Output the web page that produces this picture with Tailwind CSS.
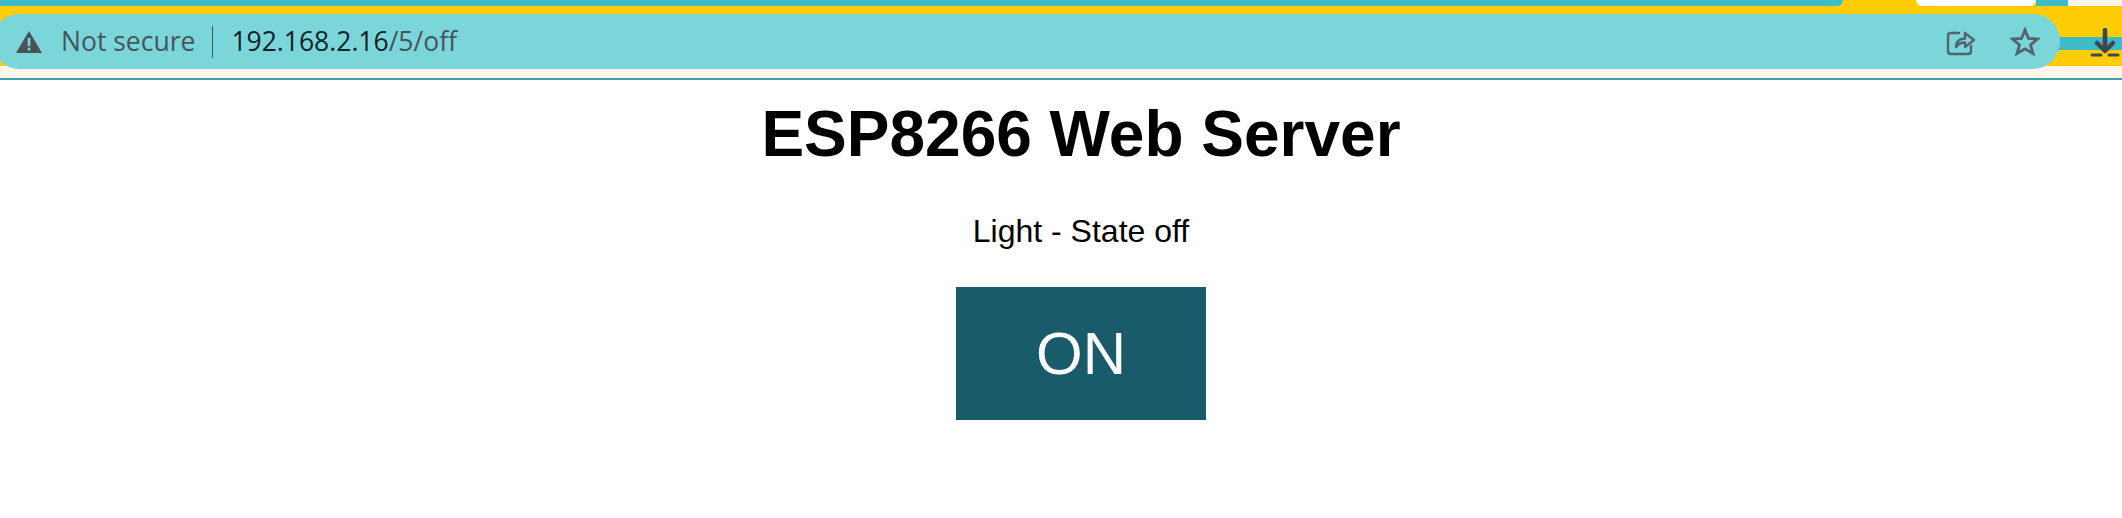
<!DOCTYPE html>
<html>
  <head>
    <title>ESP8266 Web Server</title>
    <script src="https://cdn.jsdelivr.net/npm/@tailwindcss/browser@4"></script>
  </head>
  <body class="bg-white font-['Liberation_Sans',sans-serif] h-[518px] overflow-hidden">
    <!-- browser chrome -->
    <div class="relative h-[80px] bg-[#fdf6e9] border-b-2 border-[#3fa3a5] overflow-hidden">
      <div class="flex h-[6px] bg-[#ffcd05]">
        <div class="w-[1843px] bg-[#3cbcc6] rounded-br-xl"></div>
        <div class="w-[73px]"></div>
        <div class="w-[120px] bg-white rounded-b-xl"></div>
        <div class="w-[32px] bg-[#3cbcc6]"></div>
        <div class="flex-1 bg-[#fdf6e9]"></div>
      </div>
      <div class="relative h-[60px] bg-[#ffcd05]">
        <div class="absolute left-[2050px] right-0 top-[31px] h-[13px] bg-[#3cbcc6]"></div>
      </div>

      <!-- address bar -->
      <div class="absolute left-[-8px] top-[14px] flex h-[55px] w-[2068px] items-center rounded-[28px] bg-[#7bd6da] pl-[24px] pr-[20px] font-['Open_Sans',sans-serif] text-[26.5px] text-[#47545c]">
        <svg class="w-[26px] h-[24px] shrink-0" viewBox="0 0 26 24">
          <path d="M13 1 L26 23 H0 Z" fill="#4a5258" />
          <rect x="11.7" y="8" width="2.6" height="8" fill="#7bd6da" />
          <rect x="11.7" y="17.6" width="2.6" height="2.8" fill="#7bd6da" />
        </svg>
        <span class="ml-[19px]">Not secure</span>
        <div class="ml-[17px] h-[32px] w-px bg-[#47545c]"></div>
        <div class="ml-[18px]"><span class="text-[#0e2228]">192.168.2.16</span>/5/off</div>
        <div class="ml-auto flex items-center gap-[34px]">
          <svg class="w-[30px] h-[28px]" viewBox="0 0 30 28" fill="none" stroke="#53626b" stroke-width="2.4" stroke-linejoin="round" stroke-linecap="round">
            <path d="M13 5 H5 Q2 5 2 8 V23 Q2 26 5 26 H22 Q25 26 25 23 V18" />
            <path d="M10 19 Q10 11 19 10.5 V5 L28 12 L19 19 V14.5 Q13 14.5 10 19 Z" />
          </svg>
          <svg class="w-[30px] h-[29px]" viewBox="0 0 30 29" fill="none" stroke="#53626b" stroke-width="2.8" stroke-linejoin="miter">
            <path d="M15 3 L18.5 11.5 L27.5 12 L20.5 18 L23 26.5 L15 21.8 L7 26.5 L9.5 18 L2.5 12 L11.5 11.5 Z" />
          </svg>
        </div>
      </div>

      <!-- download arrow -->
      <svg class="absolute left-[2090px] top-[28px] w-[30px] h-[30px]" viewBox="0 0 30 30" fill="none" stroke="#40474f" stroke-width="4.5" stroke-linecap="round" stroke-linejoin="round">
        <path d="M15 2 V22" />
        <path d="M7 15 L15 23 L23 15" />
        <path d="M2 27 H11 M19 27 H28" stroke-width="3" />
      </svg>
    </div>

    <!-- page -->
    <div class="flex flex-col items-center pl-[40px] text-center text-black">
      <h1 class="mt-[17px] h-[74px] text-[64px] leading-[74px] font-bold">ESP8266 Web Server</h1>
      <p class="mt-[42px] h-[37px] text-[32px] leading-[37px]">Light - State off</p>
      <a class="mt-[37px] flex h-[133px] w-[250px] items-center justify-center bg-[#195b6a] text-[60px] text-white">ON</a>
    </div>
  </body>
</html>
